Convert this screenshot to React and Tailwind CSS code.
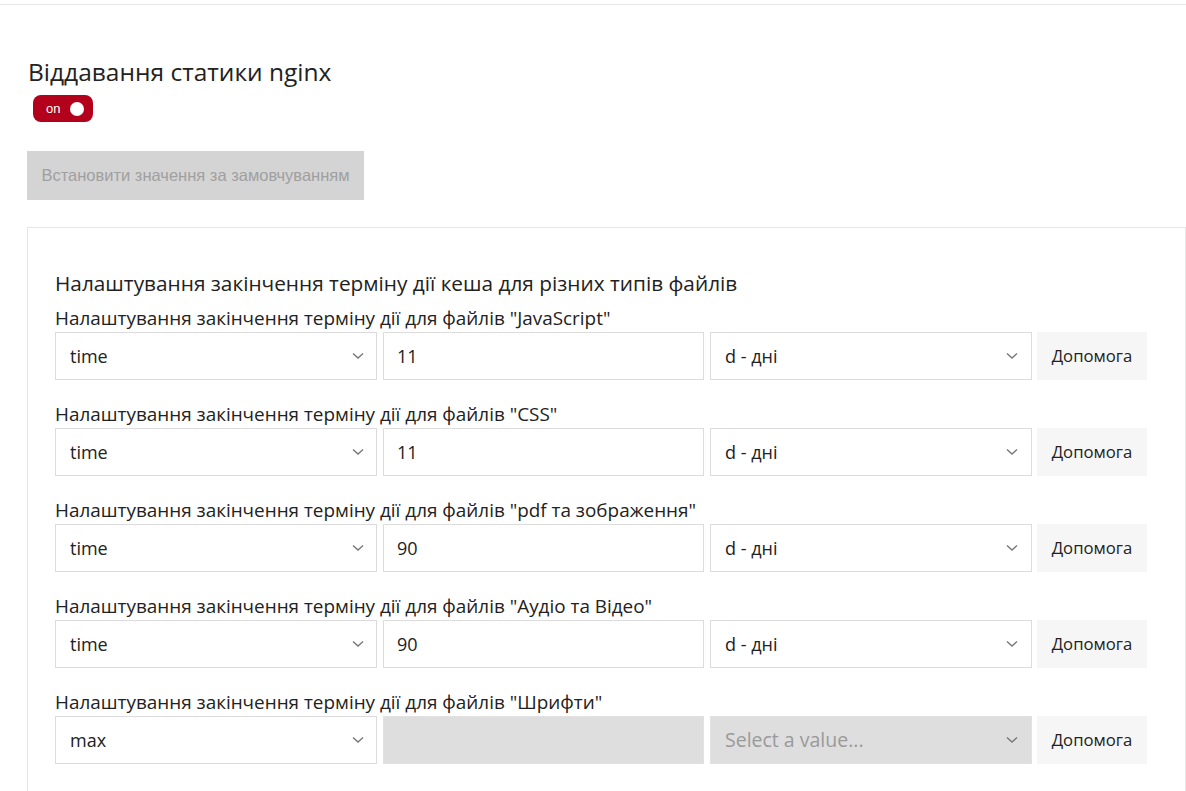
import React from "react";

const Chevron = () => (
  <svg width="12" height="8" viewBox="0 0 12 8" className="shrink-0">
    <path d="M1 1.5 L6 6 L11 1.5" fill="none" stroke="#777" strokeWidth="1.4" />
  </svg>
);

const rows = [
  { label: 'Налаштування закінчення терміну дії для файлів "JavaScript"', type: "time", value: "11", unit: "d - дні" },
  { label: 'Налаштування закінчення терміну дії для файлів "CSS"', type: "time", value: "11", unit: "d - дні" },
  { label: 'Налаштування закінчення терміну дії для файлів "pdf та зображення"', type: "time", value: "90", unit: "d - дні" },
  { label: 'Налаштування закінчення терміну дії для файлів "Аудіо та Відео"', type: "time", value: "90", unit: "d - дні" },
  { label: 'Налаштування закінчення терміну дії для файлів "Шрифти"', type: "max", value: "", unit: null },
];

export default function App() {
  return (
    <div className="w-[1186px] h-[791px] overflow-hidden bg-white text-[#222]" style={{ fontFamily: '"Open Sans", "Noto Sans", sans-serif' }}>
      <div className="h-[5px] border-b border-[#e6e6e6]" />
      <div className="pl-[27px]">
        <h1 className="mt-[51px] text-[24.5px] leading-[32px] font-normal text-[#222] pl-[1px]">Віддавання статики nginx</h1>
        <div className="mt-[7px] ml-[6px] w-[60px] h-[27px] rounded-[8px] bg-[#b3001b] flex items-center pl-[13px] pr-[9px] justify-between">
          <span className="text-white text-[13px] leading-none" style={{ fontFamily: '"Liberation Sans", Arial, sans-serif' }}>on</span>
          <span className="w-[14px] h-[14px] rounded-full bg-white" />
        </div>
        <div className="mt-[29px] w-[337px] h-[49px] bg-[#d4d4d4] flex items-center justify-center text-[16.5px] text-[#a0a0a0]" style={{ fontFamily: '"Liberation Sans", Arial, sans-serif' }}>
          Встановити значення за замовчуванням
        </div>
        <div className="mt-[27px] border border-[#e6e6e6] pt-[41px] pl-[27px] h-[600px]">
          <h2 className="text-[20.8px] leading-[28px] font-normal text-[#222]">Налаштування закінчення терміну дії кеша для різних типів файлів</h2>
          <div className="mt-[9px] flex flex-col gap-[22px]">
            {rows.map((r, i) => (
              <div key={i}>
                <div className="text-[18.9px] leading-[24px] text-[#222]">{r.label}</div>
                <div className="mt-[2px] flex items-stretch h-[48px]">
                  <div className="w-[322px] border border-[#dcdcdc] flex items-center justify-between pl-[14px] pr-[12px] text-[18px] text-[#222]">
                    <span>{r.type}</span>
                    <Chevron />
                  </div>
                  {r.unit ? (
                    <div className="ml-[6px] w-[321px] border border-[#dcdcdc] flex items-center pl-[13px] text-[18px] text-[#222]">{r.value}</div>
                  ) : (
                    <div className="ml-[6px] w-[321px] border border-[#e2e2e2] bg-[#dedede]" />
                  )}
                  {r.unit ? (
                    <div className="ml-[6px] w-[322px] border border-[#dcdcdc] flex items-center justify-between pl-[14px] pr-[13px] text-[18px] text-[#222]">
                      <span>{r.unit}</span>
                      <Chevron />
                    </div>
                  ) : (
                    <div className="ml-[6px] w-[322px] border border-[#e2e2e2] bg-[#dedede] flex items-center justify-between pl-[14px] pr-[13px] text-[19.5px] text-[#9a9a9a]">
                      <span>Select a value...</span>
                      <Chevron />
                    </div>
                  )}
                  <div className="ml-[5px] w-[110px] bg-[#f6f6f6] flex items-center justify-center text-[16.7px] text-[#222]">Допомога</div>
                </div>
              </div>
            ))}
          </div>
        </div>
      </div>
    </div>
  );
}
